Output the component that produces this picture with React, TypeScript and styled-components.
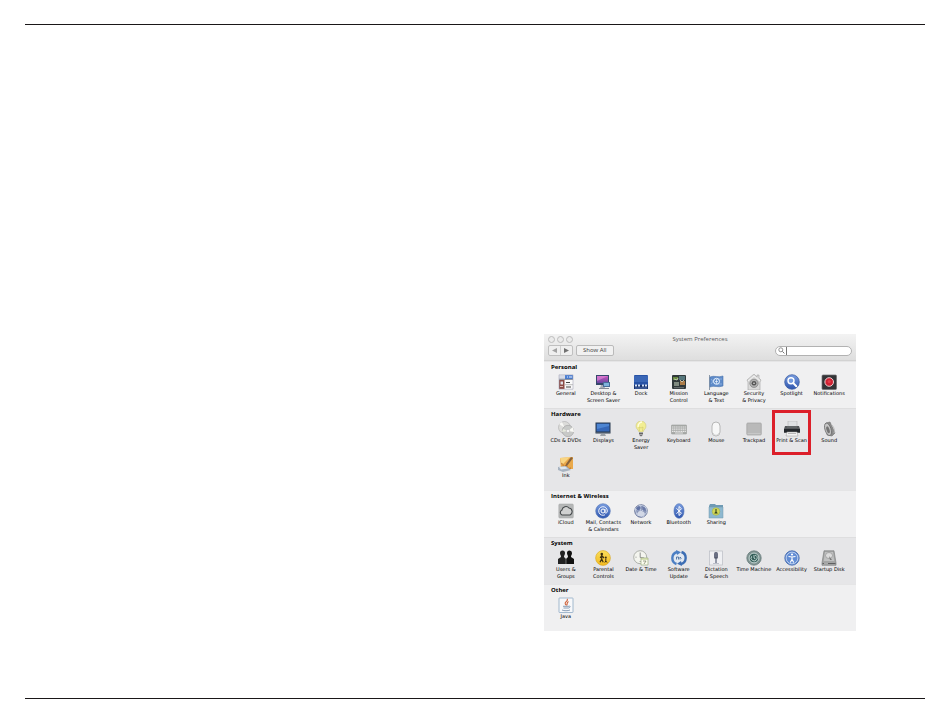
import React from "react";
import styled, { createGlobalStyle } from "styled-components";

const GlobalStyle = createGlobalStyle`
  * { box-sizing: border-box; }
  body { margin: 0; background: #fff; }
`;

const Page = styled.div`
  display: flex;
  flex-direction: column;
  min-height: 100vh;
  padding: 24px 25px 26px;
  font-family: "Open Sans", "Noto Sans", sans-serif;
  color: #1c1c1c;
`;

const Rule = styled.hr`
  width: 100%;
  height: 1px;
  margin: 0;
  border: 0;
  background: #1a1718;
`;

const Body = styled.main`
  flex: 1;
  display: grid;
  grid-template-columns: 519fr minmax(312px, 312fr) 69fr;
  align-items: end;
  padding-bottom: 67px;
`;

const PrefsWindow = styled.section`
  grid-column: 2;
  background: #f0f0f1;
`;

const TitleArea = styled.header`
  display: flex;
  flex-direction: column;
  gap: 1px;
  height: 27px;
  padding: 1px 4px 0;
  background: linear-gradient(#f3f3f3, #dedede);
  border-bottom: 1px solid #d2d2d2;
`;

const TitleRow = styled.div`
  display: grid;
  grid-template-columns: 1fr auto 1fr;
  align-items: center;
  height: 9px;
`;

const Lights = styled.div`
  display: flex;
  gap: 2px;
`;

const Light = styled.button`
  width: 7px;
  height: 7px;
  padding: 0;
  border: 1px solid #bcbcbc;
  border-radius: 50%;
  background: #ebebeb;
`;

const Title = styled.h1`
  margin: 0;
  font-size: 6px;
  line-height: 9px;
  font-weight: 400;
  color: #5c5c5c;
`;

const ToolRow = styled.div`
  display: flex;
  align-items: center;
  gap: 3px;
  height: 11px;
`;

const NavGroup = styled.div`
  display: flex;
  width: 25px;
  height: 11px;
  border: 1px solid #c0c0c0;
  border-radius: 2px;
  background: #efefef;
`;

const NavButton = styled.button`
  flex: 1;
  display: flex;
  align-items: center;
  justify-content: center;
  padding: 0;
  border: 0;
  background: none;
  color: #727272;
  & + & { border-left: 1px solid #cfcfcf; }
  &:disabled { color: #a2a2a2; }
`;

const ShowAll = styled.button`
  height: 11px;
  padding: 0 6px;
  border: 1px solid #bababa;
  border-radius: 2px;
  background: #f1f1f1;
  font: 6px/9px "Open Sans", sans-serif;
  color: #3c3c3c;
`;

const SearchBox = styled.label`
  display: flex;
  align-items: center;
  gap: 1px;
  width: 77px;
  height: 10px;
  margin-left: auto;
  padding: 0 3px 0 2px;
  border: 1px solid #b2b2b2;
  border-radius: 5px;
  background: #fff;
`;

const SearchInput = styled.input`
  flex: 1;
  min-width: 0;
  height: 8px;
  padding: 0;
  border: 0;
  border-left: 1px solid #777;
  outline: none;
  background: none;
  font: 6px/8px "Open Sans", sans-serif;
`;

const Group = styled.section<{ $shaded: boolean }>`
  padding: 2px 8px 4px 3px;
  background: ${(p) => (p.$shaded ? "#e6e6e8" : "#f0f0f1")};
  box-shadow: inset 0 1px ${(p) => (p.$shaded ? "#dededf" : "#e5e5e6")};
`;

const GroupTitle = styled.h2`
  margin: 0 0 3px;
  padding-left: 4px;
  font-size: 6px;
  line-height: 8px;
  font-weight: 700;
  color: #000;
`;

const Items = styled.div`
  display: grid;
  grid-template-columns: repeat(8, minmax(0, 1fr));
  grid-auto-rows: minmax(30px, auto);
  row-gap: 5px;
`;

const Item = styled.button<{ $marked?: boolean }>`
  position: relative;
  display: flex;
  flex-direction: column;
  align-items: center;
  justify-content: flex-start;
  padding: 0;
  border: 0;
  background: none;
  font: 5px/7px "DejaVu Sans", sans-serif;
  color: #000;
  text-align: center;
  white-space: pre;
  svg { flex: none; display: block; }
  &::after {
    content: "";
    display: ${(p) => (p.$marked ? "block" : "none")};
    position: absolute;
    inset: -11px -1px -4px;
    border: 3px solid #dc1f2a;
  }
`;

const icons: Record<string, React.ReactNode> = {
  General: (
    <>
      <path d="M1 1h14v14H1z" fill="#fafafa" />
      <path d="M1 1h6v4H1z" fill="#d8dce6" />
      <path d="M7 1h8v4H7z" fill="#4a7fd4" />
      <path d="M9 3h1m1 0h3" stroke="#e4eefc" />
      <path d="M1 5.3h14" stroke="#555d70" strokeWidth=".8" />
      <path d="M1 6h5.5v9H1z" fill="#8b4a45" />
      <path d="M2.5 7.5h2.5v3H2.5z" fill="#e1e0e8" />
      <path d="M2 12.5h3" stroke="#d8b9b3" />
      <path d="M8 8.5h4M8 13h5" stroke="#444" strokeWidth="1" />
      <path d="M7 10.7h8" stroke="#999" strokeWidth=".6" />
      <path d="M1 .8h14v14.4H1z" fill="none" stroke="#aab" strokeWidth=".6" />
    </>
  ),
  Desktop: (
    <>
      <path d="M1 1h13v10H1z" fill="#35486b" />
      <path d="M2 2h11v7H2z" fill="url(#pink)" />
      <path d="M2 2h11L2 7z" fill="#e38cda" opacity=".6" />
      <path d="M6 11h3l1 3H5z" fill="#a6abb5" />
      <path d="M8 8h7v5H8z" fill="#4a6c9a" />
      <path d="M9 9h5v3H9z" fill="#7fb3dc" />
      <path d="M4 14.5h10" stroke="#858b97" />
    </>
  ),
  Dock: (
    <>
      <rect x="1" y="1" width="14" height="14" rx="1" fill="#2853a5" />
      <path d="M1 2h14v6H1z" fill="#3a66b6" />
      <path d="M1 11h14v4H1z" fill="#18346f" />
      <path d="M2 11.5h2m1 0h2m2 0h2m1 0h2" stroke="#d3e0f5" strokeWidth="2" />
      <path d="M2 14h12" stroke="#5674b4" />
    </>
  ),
  Mission: (
    <>
      <rect x="1" y="1" width="14" height="14" rx="1" fill="#30383a" />
      <path d="M2 3h5v3H2z" fill="#65883f" />
      <path d="M8 2h6v4H8z" fill="#55767b" />
      <path d="M9 7h5v4H9z" fill="#ac7c48" />
      <path d="M3 8h5v4H3z" fill="#7f8a80" />
      <path d="M3 5l3 1 1-2m2 2l2 2 2-2" fill="none" stroke="#d6d8c5" strokeWidth=".8" />
      <path d="M3 13.7h10" stroke="#8c9090" strokeWidth=".7" />
    </>
  ),
  Language: (
    <>
      <path d="M1.5 1v15" stroke="#8c99a9" />
      <path d="M2 3c4-2 8 1 13-1v10c-5 2-9-1-13 1z" fill="#5f8bc9" stroke="#4b76ae" strokeWidth=".6" />
      <path d="M3 5l4 5m0-5l-4 5M9 5h5m-5 5h5" stroke="#9bbbe5" strokeWidth=".7" />
      <circle cx="8.5" cy="7.3" r="3" fill="none" stroke="#e9f3ff" />
      <path d="M7 7.5h3M8.5 5v5" stroke="#e9f3ff" strokeWidth=".7" />
    </>
  ),
  Security: (
    <>
      <path d="M8 0L1 6l1 2v8h12V8l1-2-2-2V1h-2v2z" fill="#dadada" stroke="#a2a2a2" strokeWidth=".6" />
      <path d="M2 7l6-5 6 5" fill="none" stroke="#f2f2f2" />
      <circle cx="8" cy="9.3" r="4.2" fill="#b0b0b0" stroke="#777" strokeWidth=".6" />
      <circle cx="8" cy="9.3" r="2.3" fill="#555" />
      <circle cx="8" cy="9.3" r=".8" fill="#eee" />
    </>
  ),
  Spotlight: (
    <>
      <circle cx="8" cy="8" r="7.3" fill="url(#blue)" stroke="#35579d" strokeWidth=".7" />
      <circle cx="7" cy="6.8" r="3" fill="#749bdf" stroke="#fff" strokeWidth="1.4" />
      <path d="M9.3 9.1l3 3.2" stroke="#fff" strokeWidth="2" strokeLinecap="round" />
    </>
  ),
  Notifications: (
    <>
      <rect x="1" y="1" width="14.5" height="14.5" rx="1" fill="#333437" stroke="#6d6d70" strokeWidth=".7" />
      <circle cx="8.2" cy="8" r="4.3" fill="#cf2233" stroke="#ead0d2" strokeWidth="1" />
      <circle cx="8.2" cy="7.5" r="1.6" fill="#e63c4a" />
    </>
  ),
  Discs: (
    <>
      <circle cx="6.5" cy="6.5" r="6" fill="#dcdcda" stroke="#acacac" strokeWidth=".6" />
      <path d="M6.5 6.5L1 3l3-2z" fill="#f8f8f5" />
      <circle cx="10" cy="10" r="5.7" fill="#c8cac8" stroke="#a0a0a0" strokeWidth=".6" />
      <path d="M10 10l5-4 1 5z" fill="#f9f9f5" />
      <path d="M10 10l-5-2-1 3z" fill="#e6eadd" />
      <circle cx="10" cy="10" r="1.8" fill="#f4f4f4" stroke="#aaa" strokeWidth=".5" />
    </>
  ),
  Displays: (
    <>
      <path d="M.5 1.5h15v11H.5z" fill="#27384f" />
      <path d="M1.5 2.5h13v8h-13z" fill="#3567b8" />
      <path d="M2 3h12v2L2 8z" fill="#4d85d2" />
      <path d="M1 12h14" stroke="#8d96a2" strokeWidth=".7" />
      <path d="M6 13h4l1 2H5z" fill="#9aa0a7" />
    </>
  ),
  Energy: (
    <>
      <path d="M8 0a5 5 0 0 0-5 5c0 3 2 3 3 6h4c1-3 3-3 3-6a5 5 0 0 0-5-5z" fill="#f2ee93" stroke="#ccc781" strokeWidth=".6" />
      <path d="M5 6c0-4 3-5 4-5" fill="none" stroke="#fffde1" strokeWidth="1.3" />
      <path d="M6.5 10L6 6l2 1 2-1-.5 4" fill="none" stroke="#cfc667" strokeWidth=".6" />
      <path d="M6 11h4v3l-1 1H7l-1-1z" fill="#a7a8a9" />
      <path d="M6 12.5h4M7 14.7h2" stroke="#555" strokeWidth=".8" />
    </>
  ),
  Keyboard: (
    <>
      <rect x=".5" y="4" width="15" height="9" rx=".5" fill="#a9aba9" stroke="#9b9d9b" strokeWidth=".6" />
      <path d="M1 6h14M1 8.2h14M1 10.4h14" stroke="#e6e6e6" strokeWidth="1.2" strokeDasharray="1.3 .5" />
      <path d="M4 12h8" stroke="#eee" strokeWidth=".8" />
    </>
  ),
  Mouse: (
    <>
      <rect x="4" y="1" width="8" height="14" rx="4" fill="#f7f7f7" stroke="#b0b0b0" strokeWidth=".9" />
      <path d="M5 12c1 3 5 3 6 0" fill="none" stroke="#d0d0d0" />
    </>
  ),
  Trackpad: (
    <>
      <rect x=".8" y="2" width="14.5" height="12" rx="1" fill="#b9b9b9" stroke="#a2a2a2" strokeWidth=".7" />
      <path d="M1.5 12.7h13" stroke="#cbcbcb" />
    </>
  ),
  Printer: (
    <>
      <path d="M4 0h9v7H4z" fill="#dfe1e3" stroke="#aaa" strokeWidth=".5" />
      <path d="M1 5h14l1 3v4H0V8z" fill="#55585b" />
      <path d="M0 8h16v3H0z" fill="#24282c" />
      <path d="M3 6h10" stroke="#717477" />
      <path d="M3 11h10l1 4H2z" fill="#f3f3f3" stroke="#9a9a9a" strokeWidth=".5" />
      <path d="M4 12.5h8" stroke="#b7b7b7" />
    </>
  ),
  Sound: (
    <>
      <path d="M5 2L9 1l5 11-3 3-5-1z" fill="#8b8b8b" stroke="#717171" strokeWidth=".6" />
      <ellipse cx="7" cy="8.3" rx="3" ry="6.5" transform="rotate(-18 7 8.3)" fill="#c6c6c6" stroke="#6d6d6d" strokeWidth=".8" />
      <ellipse cx="7" cy="8.8" rx="1.5" ry="3.6" transform="rotate(-18 7 8.8)" fill="#747474" />
      <path d="M10 3c3 3 4 6 3 9" fill="none" stroke="#bbb" />
    </>
  ),
  Ink: (
    <>
      <path d="M2 2l13-1v12H3z" fill="#eaa94a" />
      <path d="M2 2l10-1-8 8z" fill="#f8d583" />
      <path d="M13 1l2 1-6 8-2 1 1-3z" fill="#88623b" />
      <path d="M3 8c3-2 1 4 4 2s1 4 6 2" fill="none" stroke="#b46b26" strokeWidth=".9" />
      <path d="M0 11l8-1 5 4-8 2-5-2z" fill="#a7b3c1" />
      <path d="M1 11l6-.5 3 2-7 1z" fill="#dee6ec" />
    </>
  ),
  ICloud: (
    <>
      <rect x=".8" y="1" width="14.5" height="14" rx="1" fill="#b5b7b7" stroke="#a2a4a4" strokeWidth=".5" />
      <path d="M4 12a2.7 2.7 0 0 1 0-5 4 4 0 0 1 7-2 3.7 3.7 0 0 1 1 7z" fill="#d0d1d1" stroke="#44484a" strokeWidth="1.1" />
    </>
  ),
  Mail: (
    <>
      <circle cx="8" cy="8" r="7.3" fill="url(#blue)" stroke="#5376b7" strokeWidth=".6" />
      <circle cx="8" cy="8" r="2" fill="none" stroke="#fff" />
      <path d="M10 6v3c0 2 2.3 1.3 2.3-1A4.3 4.3 0 1 0 10 11.8" fill="none" stroke="#fff" strokeWidth=".9" />
    </>
  ),
  Network: (
    <>
      <circle cx="8" cy="8" r="6.3" fill="#8a96b8" stroke="#59678e" strokeWidth=".8" />
      <path d="M2 6l5-4 6 2 1 5-4 5-6-2zM2 6l6 3M7 2l1 7 5-5" fill="none" stroke="#d9e1f1" strokeWidth=".7" />
      <path d="M4 11c1-4 7-4 8 0l-1.5 2h-5z" fill="#d2d8e6" />
      <path d="M3 5l3-2 2 2-3 3z" fill="#6072a4" />
      <path d="M9 3l3 2 1 3-3-1z" fill="#6a7aa8" />
    </>
  ),
  Bluetooth: (
    <>
      <ellipse cx="8" cy="8" rx="5" ry="7.3" fill="url(#blue)" stroke="#466bb4" strokeWidth=".6" />
      <path d="M5.5 5.3l5 5-2.5 2.2v-9l2.5 2.2-5 5" fill="none" stroke="#fff" strokeWidth="1" />
    </>
  ),
  Sharing: (
    <>
      <path d="M1 3l1-2h5l1 1h7v12H1z" fill="#6f9ab4" />
      <path d="M1 4h14v11H1z" fill="#8db8d0" stroke="#7399ae" strokeWidth=".5" />
      <circle cx="8" cy="8.5" r="3.8" fill="#d0d657" stroke="#9fae3f" strokeWidth=".5" />
      <path d="M8 6v3M6.8 10.6L8 8.8l1.2 1.8" fill="none" stroke="#3a4821" strokeWidth="1.1" />
    </>
  ),
  Users: (
    <>
      <path d="M2 3a2.5 2.5 0 0 1 5 0c0 2-1 2-1 4l2 2v5H0V9l3-2C3 5 2 5 2 3z" fill="#222" />
      <path d="M9 3a2.5 2.5 0 0 1 5 0c0 2-1 2-1 4l3 2v5H8V9l2-2c0-2-1-2-1-4z" fill="#111" />
      <path d="M8 9v5" stroke="#aaa" strokeWidth=".6" />
    </>
  ),
  Parental: (
    <>
      <circle cx="8" cy="8" r="7.4" fill="url(#yellow)" stroke="#d9a61d" strokeWidth=".6" />
      <circle cx="6.8" cy="4" r="1.3" fill="#3c3010" />
      <path d="M6.7 5.5v3.5L5 12.3M6.7 9l1.5 3.3M5.2 8l1.5-2.5L9 8" fill="none" stroke="#3c3010" strokeWidth="1.2" />
      <circle cx="10.8" cy="7.5" r="1" fill="#3c3010" />
      <path d="M10.8 8.5V11l-1 1.5m1-1.5l1.2 1.5" fill="none" stroke="#3c3010" />
    </>
  ),
  Clock: (
    <>
      <circle cx="7.2" cy="7.2" r="6.5" fill="#f4f5ef" stroke="#adb0aa" />
      <path d="M7.2 2.5v5l4 .5M2.5 7.2h1M7.2 11v1" fill="none" stroke="#777" strokeWidth=".8" />
      <path d="M8 8h7v7H8z" fill="#fbfcee" stroke="#9cad82" strokeWidth=".7" />
      <path d="M8 9h7" stroke="#b4c67f" />
      <path d="M10 11h3l-2 3" fill="none" stroke="#858c73" strokeWidth=".8" />
    </>
  ),
  Update: (
    <>
      <circle cx="8" cy="8" r="5" fill="#e1e9f3" />
      <path d="M5.5 14A6.3 6.3 0 0 1 6 2" fill="none" stroke="#4b7fc4" strokeWidth="2.4" />
      <path d="M10.5 2a6.3 6.3 0 0 1-.5 12" fill="none" stroke="#3c6eb4" strokeWidth="2.4" />
      <path d="M5 0l5 2.2L6 5z" fill="#4b7fc4" />
      <path d="M11 16l-5-2.2L10 11z" fill="#3c6eb4" />
      <path d="M5.5 9.5V7h2v2.5m1.5 0V7l1.5 1.5" fill="none" stroke="#4c6f9e" strokeWidth=".9" />
    </>
  ),
  Dictation: (
    <>
      <rect x="1.5" y="1" width="13" height="14" fill="#eff0f3" stroke="#b9bdc4" strokeWidth=".7" />
      <rect x="6" y="2" width="4" height="7" rx="2" fill="#555c70" />
      <path d="M6 4h4M6 6h4" stroke="#a9afc0" strokeWidth=".5" />
      <path d="M7 9h2v4H7z" fill="#959baa" />
      <path d="M5 13.5h6" stroke="#bcc0ca" />
    </>
  ),
  TimeMachine: (
    <>
      <circle cx="8" cy="8" r="7.2" fill="#809493" stroke="#5d7371" strokeWidth=".7" />
      <circle cx="8" cy="8" r="4.9" fill="#335e58" stroke="#cad9d6" />
      <path d="M8 5v3l1.5 1M5.6 6.3a3 3 0 1 0 3.4-1.2" fill="none" stroke="#e1efec" strokeWidth=".8" />
    </>
  ),
  Accessibility: (
    <>
      <circle cx="8" cy="8" r="7.2" fill="#5b83c8" stroke="#3d66ae" strokeWidth=".8" />
      <circle cx="8" cy="8" r="5.9" fill="#638dd4" stroke="#d5e3f9" strokeWidth=".8" />
      <circle cx="8" cy="4.5" r="1.1" fill="#fff" />
      <path d="M4.5 6.5L8 7l3.5-.5M8 7v2.2L6.3 12.5M8 9.2l1.7 3.3" fill="none" stroke="#fff" strokeWidth="1.1" />
    </>
  ),
  Disk: (
    <>
      <path d="M3 .8h10l2 12v2.5H1v-2.5z" fill="#a4a5a5" stroke="#737575" strokeWidth=".6" />
      <path d="M4 2h8l1.2 9H2.8z" fill="#c0c1c1" />
      <ellipse cx="8" cy="5.5" rx="3.5" ry="3" fill="#dcdcdc" stroke="#898a8a" strokeWidth=".6" />
      <path d="M8 6l3 4H9z" fill="#777" />
      <path d="M1.5 13.5h13" stroke="#5f6060" />
      <path d="M3 13.5h4" stroke="#ccc" strokeWidth=".7" />
    </>
  ),
  Java: (
    <>
      <rect x="1" y="1" width="14" height="14.5" rx=".5" fill="#f7f8fa" stroke="#8eaac4" strokeWidth=".8" />
      <path d="M9 2c2 2-4 3-1 6M10.5 4.5C8 6 10 7 8.5 8.5" fill="none" stroke="#d0623a" strokeWidth="1.1" />
      <path d="M5 9.3h6M5.5 11h5M4 13c2 1 6 1 8 0M11 9c2 0 1 1.8-.5 2" fill="none" stroke="#6c87a4" strokeWidth=".8" />
    </>
  ),
};

type Entry = { label: string; icon: string; marked?: boolean };

const groups: { title: string; items: Entry[] }[] = [
  {
    title: "Personal",
    items: [
      { label: "General", icon: "General" },
      { label: "Desktop &\nScreen Saver", icon: "Desktop" },
      { label: "Dock", icon: "Dock" },
      { label: "Mission\nControl", icon: "Mission" },
      { label: "Language\n& Text", icon: "Language" },
      { label: "Security\n& Privacy", icon: "Security" },
      { label: "Spotlight", icon: "Spotlight" },
      { label: "Notifications", icon: "Notifications" },
    ],
  },
  {
    title: "Hardware",
    items: [
      { label: "CDs & DVDs", icon: "Discs" },
      { label: "Displays", icon: "Displays" },
      { label: "Energy\nSaver", icon: "Energy" },
      { label: "Keyboard", icon: "Keyboard" },
      { label: "Mouse", icon: "Mouse" },
      { label: "Trackpad", icon: "Trackpad" },
      { label: "Print & Scan", icon: "Printer", marked: true },
      { label: "Sound", icon: "Sound" },
      { label: "Ink", icon: "Ink" },
    ],
  },
  {
    title: "Internet & Wireless",
    items: [
      { label: "iCloud", icon: "ICloud" },
      { label: "Mail, Contacts\n& Calendars", icon: "Mail" },
      { label: "Network", icon: "Network" },
      { label: "Bluetooth", icon: "Bluetooth" },
      { label: "Sharing", icon: "Sharing" },
    ],
  },
  {
    title: "System",
    items: [
      { label: "Users &\nGroups", icon: "Users" },
      { label: "Parental\nControls", icon: "Parental" },
      { label: "Date & Time", icon: "Clock" },
      { label: "Software\nUpdate", icon: "Update" },
      { label: "Dictation\n& Speech", icon: "Dictation" },
      { label: "Time Machine", icon: "TimeMachine" },
      { label: "Accessibility", icon: "Accessibility" },
      { label: "Startup Disk", icon: "Disk" },
    ],
  },
  { title: "Other", items: [{ label: "Java", icon: "Java" }] },
];

function Icon({ name }: { name: string }) {
  return (
    <svg width="16" height="16" viewBox="0 0 16 16" aria-hidden="true">
      <defs>
        <linearGradient id="blue" x2="0" y2="1">
          <stop stopColor="#7b9ee0" />
          <stop offset="1" stopColor="#2e55ae" />
        </linearGradient>
        <linearGradient id="pink" x2="0" y2="1">
          <stop stopColor="#c956bd" />
          <stop offset="1" stopColor="#6947a2" />
        </linearGradient>
        <linearGradient id="yellow" x2="0" y2="1">
          <stop stopColor="#f9df5c" />
          <stop offset="1" stopColor="#f3b91f" />
        </linearGradient>
      </defs>
      {icons[name]}
    </svg>
  );
}

export default function App() {
  return (
    <Page>
      <GlobalStyle />
      <Rule />
      <Body>
        <PrefsWindow aria-label="System Preferences">
          <TitleArea>
            <TitleRow>
              <Lights>
                <Light aria-label="Close" />
                <Light aria-label="Minimize" />
                <Light aria-label="Zoom" />
              </Lights>
              <Title>System Preferences</Title>
            </TitleRow>
            <ToolRow>
              <NavGroup>
                <NavButton aria-label="Back" disabled>
                  <svg width="5" height="5" viewBox="0 0 5 5"><path d="M5 0v5L0 2.5z" fill="currentColor" /></svg>
                </NavButton>
                <NavButton aria-label="Forward">
                  <svg width="5" height="5" viewBox="0 0 5 5"><path d="M0 0v5l5-2.5z" fill="currentColor" /></svg>
                </NavButton>
              </NavGroup>
              <ShowAll>Show All</ShowAll>
              <SearchBox>
                <svg width="7" height="7" viewBox="0 0 7 7" aria-hidden="true">
                  <circle cx="2.8" cy="2.8" r="2" fill="none" stroke="#777" strokeWidth=".8" />
                  <path d="M4.4 4.4l2 2" stroke="#777" />
                </svg>
                <SearchInput type="text" aria-label="Search preferences" />
              </SearchBox>
            </ToolRow>
          </TitleArea>
          {groups.map((group, i) => (
            <Group key={group.title} $shaded={i % 2 === 1}>
              <GroupTitle>{group.title}</GroupTitle>
              <Items>
                {group.items.map((item) => (
                  <Item key={item.label} $marked={item.marked}>
                    <Icon name={item.icon} />
                    {item.label}
                  </Item>
                ))}
              </Items>
            </Group>
          ))}
        </PrefsWindow>
      </Body>
      <Rule />
    </Page>
  );
}
